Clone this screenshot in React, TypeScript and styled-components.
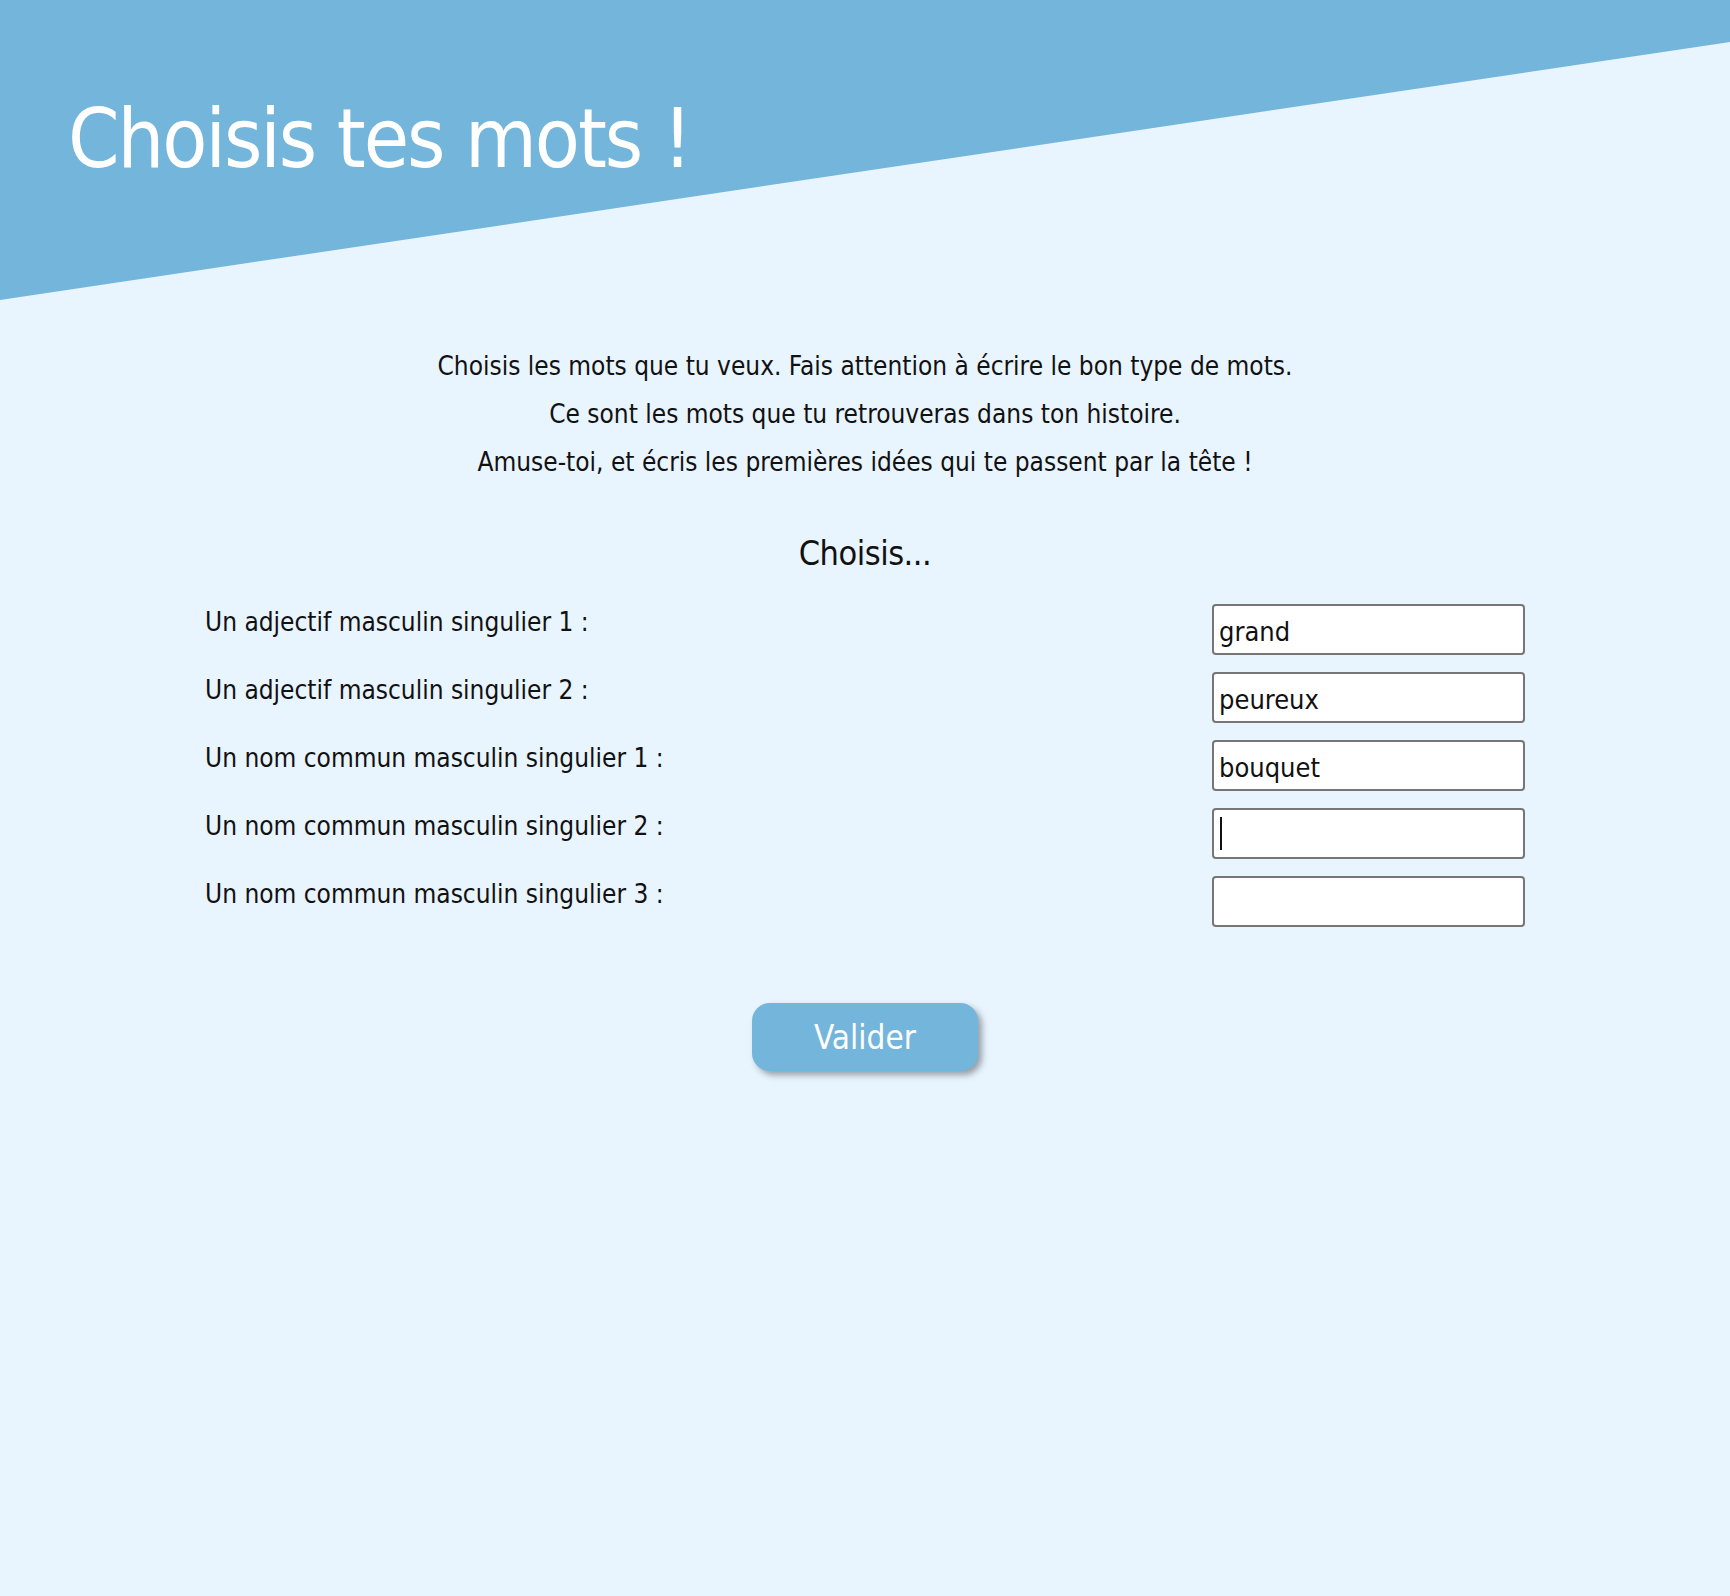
import React from "react";
import styled, { createGlobalStyle } from "styled-components";

const FONT = `"DejaVu Sans Condensed", "Liberation Sans Narrow", Lato, sans-serif`;

const GlobalStyle = createGlobalStyle`
  html, body {
    margin: 0;
    padding: 0;
    background: #e8f4fe;
    min-height: 1596px;
  }
  body {
    font-family: ${FONT};
    color: #111;
  }
`;

const Page = styled.div`
  min-height: 1596px;
  background: #e8f4fe;
  display: flex;
  flex-direction: column;
`;

const Header = styled.header`
  height: 300px;
  background: #73b5db;
  clip-path: polygon(0 0, 100% 0, 100% 42px, 0 100%);
  box-sizing: border-box;
  padding: 98px 0 0 68px;
`;

const Title = styled.h1`
  margin: 0;
  font-family: ${FONT};
  font-weight: 400;
  font-size: 82px;
  line-height: 1;
  color: #ffffff;
  letter-spacing: -2px;
`;

const Main = styled.main`
  width: 1320px;
  margin: 0 auto;
  display: flex;
  flex-direction: column;
  align-items: stretch;
`;

const Intro = styled.div`
  margin-top: 42px;
  text-align: center;
  font-size: 26px;
  line-height: 48px;
`;

const Line = styled.p`
  margin: 0;
`;

const SectionTitle = styled.h2`
  margin: 45px 0 29px;
  text-align: center;
  font-weight: 400;
  font-size: 34px;
  line-height: 44px;
  letter-spacing: -0.5px;
`;

const Fields = styled.div`
  display: flex;
  flex-direction: column;
  gap: 17px;
`;

const Row = styled.div`
  display: flex;
  justify-content: space-between;
  align-items: flex-start;
`;

const Label = styled.label`
  font-size: 26px;
  line-height: 36px;
`;

const InputWrap = styled.div`
  position: relative;
  width: 313px;
  height: 51px;
`;

const Input = styled.input`
  box-sizing: border-box;
  width: 100%;
  height: 100%;
  border: 2px solid #767676;
  border-radius: 4px;
  background: #fff;
  padding: 4px 5px 0;
  font-family: ${FONT};
  font-size: 27px;
  color: #111;
  outline: none;
`;

const Caret = styled.span`
  position: absolute;
  left: 8px;
  top: 9px;
  width: 2px;
  height: 33px;
  background: #111;
`;

const ButtonRow = styled.div`
  display: flex;
  justify-content: center;
  margin-top: 76px;
`;

const Button = styled.button`
  width: 226px;
  height: 68px;
  border: none;
  border-radius: 18px;
  background: #73b5db;
  color: #fff;
  font-family: ${FONT};
  font-size: 33px;
  box-shadow: 4px 4px 6px rgba(80, 90, 100, 0.55);
  cursor: pointer;
`;

const fields = [
  { label: "Un adjectif masculin singulier 1 :", value: "grand" },
  { label: "Un adjectif masculin singulier 2 :", value: "peureux" },
  { label: "Un nom commun masculin singulier 1 :", value: "bouquet" },
  { label: "Un nom commun masculin singulier 2 :", value: "", caret: true },
  { label: "Un nom commun masculin singulier 3 :", value: "" },
];

export default function App() {
  return (
    <Page>
      <GlobalStyle />
      <Header>
        <Title>Choisis tes mots !</Title>
      </Header>
      <Main>
        <Intro>
          <Line>Choisis les mots que tu veux. Fais attention à écrire le bon type de mots.</Line>
          <Line>Ce sont les mots que tu retrouveras dans ton histoire.</Line>
          <Line>Amuse-toi, et écris les premières idées qui te passent par la tête !</Line>
        </Intro>
        <SectionTitle>Choisis...</SectionTitle>
        <Fields>
          {fields.map((f, i) => (
            <Row key={i}>
              <Label htmlFor={`f${i}`}>{f.label}</Label>
              <InputWrap>
                <Input id={`f${i}`} defaultValue={f.value} />
                {f.caret && <Caret />}
              </InputWrap>
            </Row>
          ))}
        </Fields>
        <ButtonRow>
          <Button type="button">Valider</Button>
        </ButtonRow>
      </Main>
    </Page>
  );
}
